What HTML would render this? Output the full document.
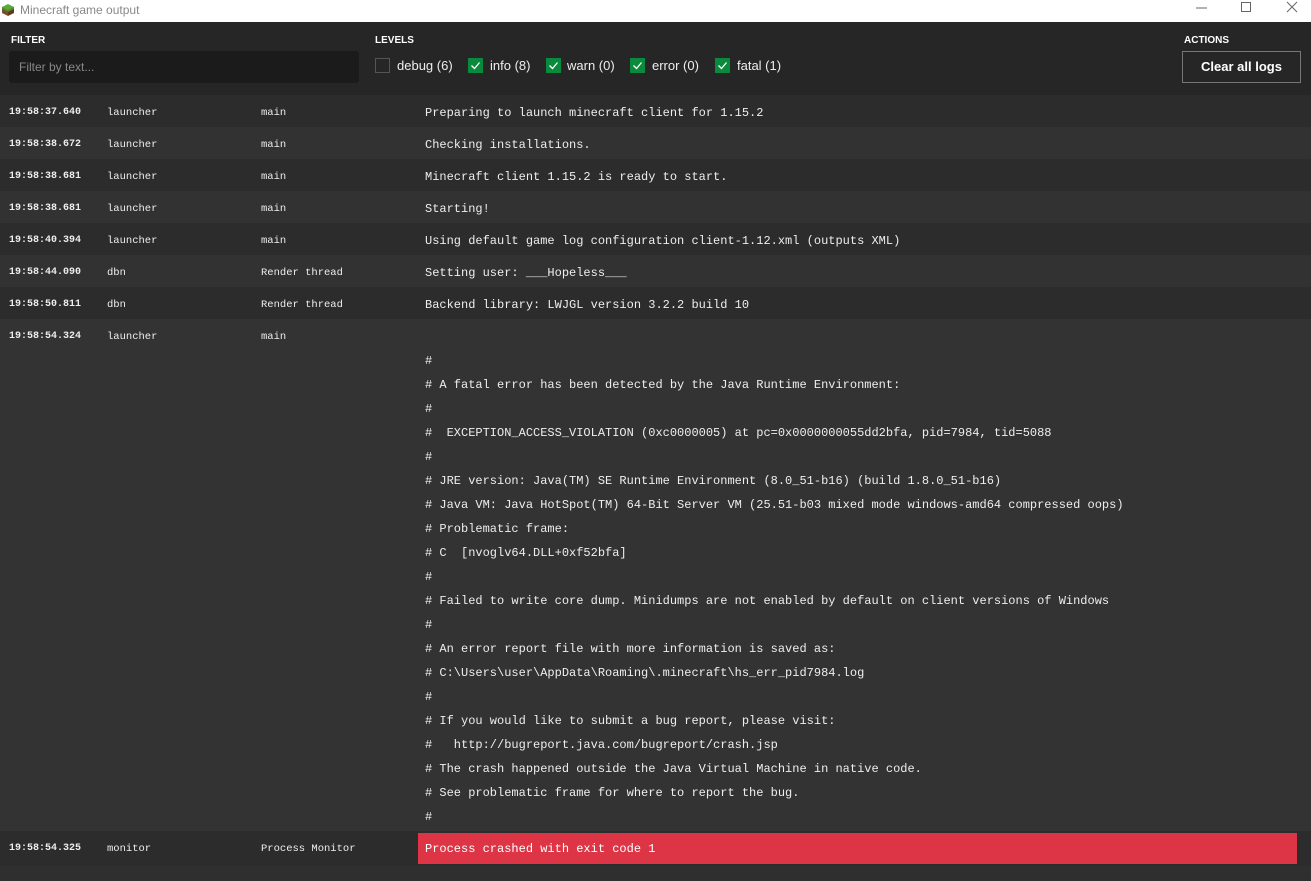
<!DOCTYPE html>
<html><head><meta charset="utf-8"><style>
*{margin:0;padding:0;box-sizing:border-box}
body{width:1311px;height:881px;overflow:hidden;background:#2f2f2f;font-family:"Liberation Sans",sans-serif;color:#fff}
.title{height:22px;background:#fff;position:relative;color:#888;font-size:12px}
.title .t{position:absolute;left:20px;top:3px}
.icon{position:absolute;left:1px;top:3px;width:14px;height:14px}
.wc{position:absolute;top:0;height:22px;color:#555}
.head{height:73px;background:#262626;position:relative}
.lbl{position:absolute;top:13px;font-size:10px;font-weight:bold;color:#fff}
.inp{position:absolute;left:9px;top:29px;width:350px;height:32px;background:#1b1b1b;border-radius:3px;color:#888;font-size:12px;padding:9px 10px}
.cb{position:absolute;top:36px;width:15px;height:15px}
.cb.on{background:#0a8a3c}
.cb.off{border:1px solid #555}
.cb svg{position:absolute;left:2px;top:2px}
.cl{position:absolute;top:36px;font-size:13px;color:#eee}
.btn{position:absolute;left:1182px;top:29px;width:119px;height:32px;border:1px solid #777;font-size:13px;font-weight:bold;text-align:center;line-height:30px}
.row{position:relative;height:32px;font-family:"Liberation Mono",monospace}
.row span{position:absolute;top:12px;font-size:10.5px;color:#eee;white-space:pre}
.ts{left:9px;font-size:10px!important;font-weight:bold}
.src{left:107px}.th{left:261px}
.msg{left:425px;font-size:12px!important;top:11px!important}
.a{background:#2c2c2c}.b{background:#323232}
.big{position:relative;height:512px;background:#333;font-family:"Liberation Mono",monospace}
.big span{position:absolute;top:12px;font-size:10.5px;color:#eee}
.big pre{position:absolute;left:425px;top:30px;font-family:"Liberation Mono",monospace;font-size:12px;line-height:24px;color:#eee}
.err{position:absolute;left:418px;top:2px;width:879px;height:31px;background:#de3546}
.err b{position:absolute;left:7px;top:9px;font-size:12px;color:#fff;white-space:pre;font-weight:normal}
</style></head><body>
<div class="title">
<svg class="icon" viewBox="0 0 14 14"><polygon points="7,1 13,4 7,7 1,4" fill="#5cab3a"/><polygon points="1,4 7,7 7,13 1,10" fill="#7a4e2b"/><polygon points="13,4 7,7 7,13 13,10" fill="#5e3a1f"/><polygon points="1,4 7,7 13,4 13,6 7,9 1,6" fill="#4a8f2c"/></svg>
<span class="t">Minecraft game output</span>
<svg class="wc" style="left:1195px" width="14" height="22"><line x1="1" y1="8" x2="12" y2="8" stroke="#666"/></svg>
<svg class="wc" style="left:1240px" width="14" height="22"><rect x="1.5" y="2.5" width="9" height="9" fill="none" stroke="#666"/></svg>
<svg class="wc" style="left:1286px" width="14" height="22"><path d="M1 2L11 12M11 2L1 12" stroke="#666"/></svg>
</div>
<div class="head">
<div class="lbl" style="left:11px">FILTER</div>
<div class="inp">Filter by text...</div>
<div class="lbl" style="left:375px">LEVELS</div>
<div class="cb off" style="left:375px"></div><div class="cl" style="left:397px">debug (6)</div>
<div class="cb on" style="left:468px"><svg width="11" height="11"><path d="M1.5 5.5L4.5 8.5L9.5 2.5" stroke="#fff" stroke-width="1.3" fill="none"/></svg></div><div class="cl" style="left:490px">info (8)</div>
<div class="cb on" style="left:546px"><svg width="11" height="11"><path d="M1.5 5.5L4.5 8.5L9.5 2.5" stroke="#fff" stroke-width="1.3" fill="none"/></svg></div><div class="cl" style="left:567px">warn (0)</div>
<div class="cb on" style="left:630px"><svg width="11" height="11"><path d="M1.5 5.5L4.5 8.5L9.5 2.5" stroke="#fff" stroke-width="1.3" fill="none"/></svg></div><div class="cl" style="left:652px">error (0)</div>
<div class="cb on" style="left:715px"><svg width="11" height="11"><path d="M1.5 5.5L4.5 8.5L9.5 2.5" stroke="#fff" stroke-width="1.3" fill="none"/></svg></div><div class="cl" style="left:737px">fatal (1)</div>
<div class="lbl" style="left:1184px">ACTIONS</div>
<div class="btn">Clear all logs</div>
</div>
<div class="row a"><span class="ts">19:58:37.640</span><span class="src">launcher</span><span class="th">main</span><span class="msg">Preparing to launch minecraft client for 1.15.2</span></div>
<div class="row b"><span class="ts">19:58:38.672</span><span class="src">launcher</span><span class="th">main</span><span class="msg">Checking installations.</span></div>
<div class="row a"><span class="ts">19:58:38.681</span><span class="src">launcher</span><span class="th">main</span><span class="msg">Minecraft client 1.15.2 is ready to start.</span></div>
<div class="row b"><span class="ts">19:58:38.681</span><span class="src">launcher</span><span class="th">main</span><span class="msg">Starting!</span></div>
<div class="row a"><span class="ts">19:58:40.394</span><span class="src">launcher</span><span class="th">main</span><span class="msg">Using default game log configuration client-1.12.xml (outputs XML)</span></div>
<div class="row b"><span class="ts">19:58:44.090</span><span class="src">dbn</span><span class="th">Render thread</span><span class="msg">Setting user: ___Hopeless___</span></div>
<div class="row a"><span class="ts">19:58:50.811</span><span class="src">dbn</span><span class="th">Render thread</span><span class="msg">Backend library: LWJGL version 3.2.2 build 10</span></div>
<div class="big"><span class="ts" style="left:9px;font-size:10px;font-weight:bold">19:58:54.324</span><span style="left:107px">launcher</span><span style="left:261px">main</span>
<pre>#
# A fatal error has been detected by the Java Runtime Environment:
#
#  EXCEPTION_ACCESS_VIOLATION (0xc0000005) at pc=0x0000000055dd2bfa, pid=7984, tid=5088
#
# JRE version: Java(TM) SE Runtime Environment (8.0_51-b16) (build 1.8.0_51-b16)
# Java VM: Java HotSpot(TM) 64-Bit Server VM (25.51-b03 mixed mode windows-amd64 compressed oops)
# Problematic frame:
# C  [nvoglv64.DLL+0xf52bfa]
#
# Failed to write core dump. Minidumps are not enabled by default on client versions of Windows
#
# An error report file with more information is saved as:
# C:\Users\user\AppData\Roaming\.minecraft\hs_err_pid7984.log
#
# If you would like to submit a bug report, please visit:
#   http://bugreport.java.com/bugreport/crash.jsp
# The crash happened outside the Java Virtual Machine in native code.
# See problematic frame for where to report the bug.
#</pre></div>
<div class="row a" style="height:35px"><span class="ts">19:58:54.325</span><span class="src">monitor</span><span class="th">Process Monitor</span><div class="err"><b>Process crashed with exit code 1</b></div></div>
</body></html>
